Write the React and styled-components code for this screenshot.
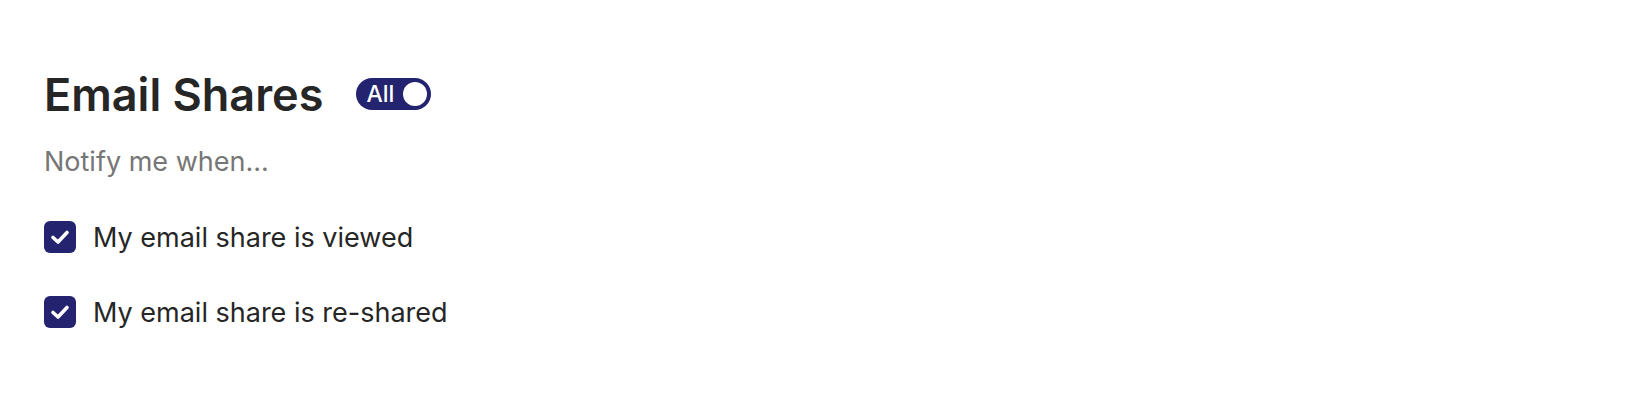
import styled, { createGlobalStyle } from "styled-components";

const GlobalStyle = createGlobalStyle`
  body {
    margin: 0;
    background: #fff;
    font-family: Inter, "Noto Sans", sans-serif;
  }
`;

const Page = styled.div`
  padding: 68px 44px 0 44px;
`;

const Header = styled.div`
  display: flex;
  align-items: center;
  gap: 33px;
  height: 52px;
`;

const Title = styled.h2`
  margin: 0;
  font-size: 45px;
  font-weight: 600;
  color: #262626;
  letter-spacing: 0;
`;

const Toggle = styled.button`
  display: flex;
  align-items: center;
  justify-content: space-between;
  width: 75px;
  height: 32px;
  padding: 0 4px 0 10px;
  border: none;
  border-radius: 16px;
  background: ${(p) => (p.$on ? "#232370" : "#c8c8c8")};
  color: #fff;
  font-family: inherit;
  font-size: 23px;
  font-weight: 500;
  box-sizing: border-box;
`;

const Knob = styled.span`
  width: 24px;
  height: 24px;
  border-radius: 50%;
  background: #fff;
`;

const Subtitle = styled.p`
  margin: 25px 0 0 0;
  font-size: 27px;
  color: #767676;
  line-height: 34px;
`;

const List = styled.div`
  display: flex;
  flex-direction: column;
  gap: 41px;
  margin-top: 41px;
`;

const Row = styled.label`
  display: flex;
  align-items: center;
  gap: 17px;
  height: 34px;
  font-size: 27px;
  color: #262626;
`;

const Box = styled.span`
  display: flex;
  flex-shrink: 0;
  align-items: center;
  justify-content: center;
  width: 32px;
  height: 32px;
  border-radius: 6px;
  background: #232370;
`;

function Check({ label }) {
  return (
    <Row>
      <Box>
        <svg width="24" height="24" viewBox="0 0 24 24" fill="none">
          <path d="M5 12.5 L10 17 L19 7.5" stroke="#fff" strokeWidth="3.6" strokeLinecap="round" strokeLinejoin="round" />
        </svg>
      </Box>
      {label}
    </Row>
  );
}

export default function App() {
  return (
    <>
      <GlobalStyle />
      <Page>
        <Header>
          <Title>Email Shares</Title>
          <Toggle $on>
            All
            <Knob />
          </Toggle>
        </Header>
        <Subtitle>Notify me when...</Subtitle>
        <List>
          <Check label="My email share is viewed" />
          <Check label="My email share is re-shared" />
        </List>
      </Page>
    </>
  );
}
